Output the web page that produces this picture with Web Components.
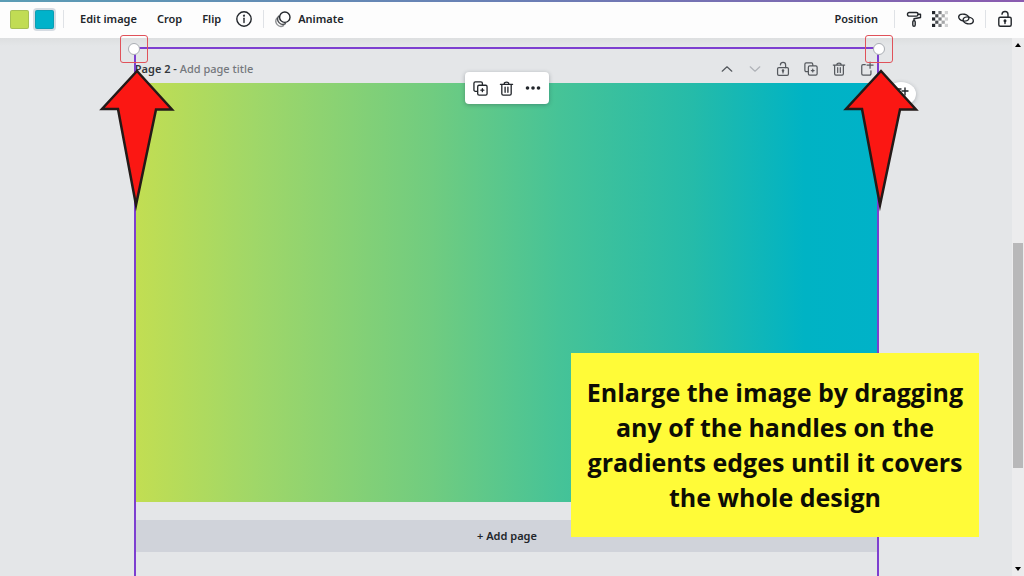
<!DOCTYPE html>
<html lang="en">

<head>
    <meta charset="UTF-8">
    <meta name="viewport" content="width=device-width, initial-scale=1.0">
    <title>Page editor</title>
    <style>
        html,
        body {
            height: 100%;
            margin: 0;
        }

        body {
            overflow: hidden;
            color: #22262b;
            background: #e4e6e8;
            font: 600 11px/16px "Noto Sans", sans-serif;
        }
    </style>

<template id="tool-button-template">
    <style>
        :host {
            display: flex;
        }
        button {
            display: flex;
            align-items: center;
            justify-content: center;
            gap: 7px;
            width: 100%;
            margin: 0;
            padding: 4px var(--pad, 10px);
            border: 0;
            border-radius: 4px;
            color: inherit;
            background: none;
            font: inherit;
            white-space: nowrap;
            cursor: pointer;
        }
        button:hover {
            background: rgba(64, 87, 109, .07);
        }
    </style>
    <button type="button"><slot></slot></button>
</template>

<template id="colour-swatch-template">
    <style>
        :host {
            display: block;
        }
        button {
            display: block;
            width: 19px;
            height: 19px;
            padding: 0;
            border: 1px solid rgba(60, 80, 90, .2);
            border-radius: 2px;
            background: var(--swatch);
        }
        :host([selected]) button {
            box-shadow: 0 0 0 2px #d5dbe2;
        }
    </style>
    <button type="button"></button>
</template>

<template id="editor-toolbar-template">
    <style>
        :host {
            display: block;
            background: #fdfdfd;
        }
        .strip {
            height: 2px;
            background: linear-gradient(90deg, #5b9db5, #6a7fb5 50%, #8a5bb0);
        }
        nav {
            display: flex;
            align-items: center;
            justify-content: space-between;
            height: 36px;
            padding: 0 6px 2px 10px;
            box-sizing: border-box;
        }
        .side,
        .swatches {
            display: flex;
            align-items: center;
        }
        .swatches {
            gap: 6px;
            padding-right: 3px;
        }
        .line {
            width: 1px;
            height: 18px;
            margin: 0 6px;
            background: #dfe2e6;
        }
        .icon {
            --pad: 0;
            width: 26px;
        }
    </style>
    <div class="strip"></div>
    <nav>
        <div class="side">
            <div class="swatches">
                <colour-swatch label="Green" style="--swatch: #c1dc54"></colour-swatch>
                <colour-swatch label="Teal" selected style="--swatch: #00b2ca"></colour-swatch>
            </div>
            <span class="line"></span>
            <tool-button>Edit image</tool-button>
            <tool-button>Crop</tool-button>
            <tool-button>Flip</tool-button>
            <tool-button class="icon" label="Info"><ui-icon name="info"></ui-icon></tool-button>
            <span class="line"></span>
            <tool-button style="--pad: 5px"><ui-icon name="animate"></ui-icon>Animate</tool-button>
        </div>
        <div class="side">
            <tool-button>Position</tool-button>
            <span class="line"></span>
            <tool-button class="icon" label="Copy style"><ui-icon name="roller"></ui-icon></tool-button>
            <tool-button class="icon" label="Transparency"><ui-icon name="checker"></ui-icon></tool-button>
            <tool-button class="icon" label="Link"><ui-icon name="link"></ui-icon></tool-button>
            <span class="line"></span>
            <tool-button class="icon" label="Lock"><ui-icon name="lock"></ui-icon></tool-button>
        </div>
    </nav>
</template>

<template id="page-header-template">
    <style>
        :host {
            display: flex;
            align-items: center;
            justify-content: space-between;
            height: 29px;
            color: #33373c;
        }
        h2 {
            margin: 0;
            font: inherit;
        }
        .actions {
            display: flex;
            gap: 4px;
            color: #55595e;
        }
        tool-button {
            --pad: 0;
            width: 24px;
        }
        .faded {
            color: #b0b3b8;
        }
    </style>
    <h2><slot></slot></h2>
    <div class="actions">
        <tool-button label="Move page up"><ui-icon name="up" size="14"></ui-icon></tool-button>
        <tool-button class="faded" label="Move page down"><ui-icon name="down" size="14"></ui-icon></tool-button>
        <tool-button label="Lock page"><ui-icon name="lock" size="14"></ui-icon></tool-button>
        <tool-button label="Duplicate page"><ui-icon name="copy" size="14"></ui-icon></tool-button>
        <tool-button label="Delete page"><ui-icon name="trash" size="14"></ui-icon></tool-button>
        <tool-button label="New page"><ui-icon name="newpage" size="14"></ui-icon></tool-button>
    </div>
</template>

<template id="float-menu-template">
    <style>
        :host {
            display: flex;
            padding: 4px 3px;
            border-radius: 4px;
            background: #fff;
            box-shadow: 0 1px 4px rgba(40, 50, 60, .35);
        }
        tool-button {
            --pad: 0;
            width: 26px;
        }
    </style>
    <tool-button label="Duplicate"><ui-icon name="copy" size="15"></ui-icon></tool-button>
    <tool-button label="Delete"><ui-icon name="trash" size="15"></ui-icon></tool-button>
    <tool-button label="More"><ui-icon name="more"></ui-icon></tool-button>
</template>

<template id="red-arrow-template">
    <style>
        :host {
            display: block;
            width: 76px;
        }
        svg {
            display: block;
            width: 100%;
        }
    </style>
    <svg viewBox="0 0 76 146" aria-hidden="true">
        <path d="M38 4 73 42.500H57L37 138 19 42H3Z" fill="#fb1713" stroke="#231a18" stroke-width="2.500" stroke-miterlimit="12"/>
    </svg>
</template>

<template id="selection-frame-template">
    <style>
        :host {
            display: block;
            border: 2px solid #7d3fd0;
            border-bottom: 0;
            pointer-events: none;
        }
        .corner {
            position: absolute;
            top: -14px;
            display: grid;
            place-items: center;
            width: 26px;
            height: 26px;
            border: 1px solid #e0525a;
            border-radius: 3px;
        }
        .left {
            left: -16px;
        }
        .right {
            right: -16px;
        }
        .handle {
            width: 10px;
            height: 10px;
            border: 1px solid #a9adb3;
            border-radius: 50%;
            background: #fff;
        }
        red-arrow {
            position: absolute;
            top: 18px;
        }
        .arrow-left {
            left: -37px;
        }
        .arrow-right {
            right: -42px;
        }
    </style>
    <red-arrow class="arrow-left"></red-arrow>
    <red-arrow class="arrow-right"></red-arrow>
    <div class="corner left"><span class="handle"></span></div>
    <div class="corner right"><span class="handle"></span></div>
</template>

<template id="design-page-template">
    <style>
        :host {
            display: block;
            position: relative;
            width: 73.7%;
            height: 100%;
            margin: 0 auto;
            padding-top: 16px;
            box-sizing: border-box;
        }
        .design {
            aspect-ratio: 16 / 9;
            background: linear-gradient(90deg, #c2de52, #a0d768 16%, #70cc80 40%, #46c397 57%, #25bba9 75%, #00b3c4 90%, #00b2c8);
        }
        .add {
            display: block;
            width: 100%;
            margin: 18px 0 0;
            padding: 8px;
            border: 0;
            color: inherit;
            background: #d0d3da;
            font: inherit;
        }
        float-menu {
            position: absolute;
            top: 34px;
            left: 50%;
            transform: translateX(-50%);
        }
        .comment {
            position: absolute;
            top: 44px;
            right: -37px;
            border-radius: 50%;
            background: #fff;
            box-shadow: 0 1px 4px rgba(40, 50, 60, .3);
            --pad: 7px;
        }
        selection-frame {
            position: absolute;
            top: 9px;
            right: 0;
            bottom: 0;
            left: -1px;
        }
    </style>
    <page-header><slot name="title"></slot></page-header>
    <div class="design"></div>
    <button class="add" type="button"><slot name="add"></slot></button>
    <tool-button class="comment" label="Add comment"><ui-icon name="comment"></ui-icon></tool-button>
    <float-menu></float-menu>
    <selection-frame></selection-frame>
</template>

<template id="scroll-rail-template">
    <style>
        :host {
            display: flex;
            flex-direction: column;
            width: 12px;
            background: #ececed;
        }
        button {
            display: grid;
            place-items: center;
            height: 14px;
            padding: 0;
            border: 0;
            color: #222;
            background: none;
        }
        .track {
            display: grid;
            flex: 1;
            grid-template-rows: 191fr 224fr 94fr;
        }
        .thumb {
            grid-row: 2;
            margin: 0 1px;
            background: #b8b8b9;
        }
    </style>
    <button type="button" aria-label="Scroll up"><svg width="6" height="4"><path d="M0 4 3 0l3 4z"/></svg></button>
    <div class="track"><div class="thumb"></div></div>
    <button type="button" aria-label="Scroll down"><svg width="6" height="4"><path d="M0 0h6L3 4z"/></svg></button>
</template>

<template id="tip-note-template">
    <style>
        :host {
            display: block;
            width: 408px;
            padding: 22px 8px;
            box-sizing: border-box;
            color: #0d0d05;
            background: #fffb38;
            font: 700 25px/35px "Open Sans", sans-serif;
            text-align: center;
        }
        p {
            margin: 0;
        }
    </style>
    <p><slot></slot></p>
</template>

<template id="design-editor-template">
    <style>
        :host {
            display: flex;
            flex-direction: column;
            position: relative;
            height: 100%;
        }
        .workspace {
            display: flex;
            flex: 1;
            min-height: 0;
        }
        main {
            flex: 1;
            position: relative;
            min-width: 0;
            padding-left: 2px;
            background: linear-gradient(#dddfe0, #e4e6e8 8px);
        }
        ::slotted(tip-note) {
            position: absolute;
            right: 45px;
            bottom: 39px;
        }
    </style>
    <editor-toolbar></editor-toolbar>
    <div class="workspace">
        <main><slot></slot></main>
        <scroll-rail></scroll-rail>
    </div>
    <slot name="note"></slot>
</template>
</head>

<body>
    <design-editor>
        <design-page>
            <page-title slot="title">Page 2 - <span>Add page title</span></page-title>
            <span slot="add">+ Add page</span>
        </design-page>
        <tip-note slot="note">Enlarge the image by dragging any of the handles on the gradients edges until it covers the whole design</tip-note>
    </design-editor>

<script>
    // 16x16 line icons
    const icons = {
        info: '<circle cx="8" cy="8" r="7.200"/><path d="M8 7.300v4.200"/><circle cx="8" cy="4.700" r=".4" fill="currentColor"/>',
        animate: '<circle cx="9.800" cy="6.200" r="5.200"/><path d="M3.600 5.200a5.200 5.200 0 0 0 6.800 7.500" opacity=".8"/><path d="M1.800 7.200a5.200 5.200 0 0 0 6.800 7.500" opacity=".5"/>',
        roller: '<rect x="1.500" y="1.500" width="10.500" height="3.600" rx="1.600"/><path d="M12 3.200h2.500v3.300L8 7.800v2"/><rect x="6.800" y="9.600" width="2.400" height="5.600" rx="1.200"/>',
        link: '<ellipse cx="5.800" cy="6.600" rx="5.200" ry="3.400" transform="rotate(12 5.800 6.600)"/><ellipse cx="10.200" cy="9.400" rx="5.200" ry="3.400" transform="rotate(12 10.200 9.400)"/>',
        lock: '<rect x="1.800" y="6.300" width="12.400" height="9" rx="1.500"/><path d="M5 3.200C5.500-.5 11-.300 11 3.500v2.800M8 9.500v3"/><circle cx="8" cy="9.800" r=".8" fill="currentColor"/>',
        up: '<path d="m2.500 10.500 5.500-5 5.500 5"/>',
        down: '<path d="m2.500 5.500 5.500 5 5.500-5"/>',
        copy: '<path d="M4.500 11H2.500A1.500 1.500 0 0 1 1 9.500v-7A1.500 1.500 0 0 1 2.500 1h6A1.500 1.500 0 0 1 10 2.500V4"/><rect x="5" y="4.500" width="10" height="10.500" rx="1.500"/><path d="M10 8.200v3.200M8.400 9.800h3.200"/>',
        trash: '<path d="M1.500 3.500h13M5.500 3.300C5.500.500 10.500.500 10.500 3.300M3 3.700v9.800A1.500 1.500 0 0 0 4.500 15h7a1.500 1.500 0 0 0 1.500-1.500V3.700M6.500 6.500v5.500M9.500 6.500v5.500"/>',
        more: '<g fill="currentColor" stroke="none"><circle cx="2.500" cy="8" r="1.800"/><circle cx="8" cy="8" r="1.800"/><circle cx="13.500" cy="8" r="1.800"/></g>',
        newpage: '<path d="M6 3H3.500A1.500 1.500 0 0 0 2 4.500v9A1.500 1.500 0 0 0 3.500 15H11a1.500 1.500 0 0 0 1.500-1.500V10M11.500 0v7M8 3.500h7"/>',
        comment: '<path d="M12 2v7M9 5h6M8 3H3.500A1.500 1.500 0 0 0 2 4.500v6A1.500 1.500 0 0 0 3.500 12H10"/>'
    }

    // transparency checkerboard, fading out to the right
    let cells = ""
    for (let y = 0; y < 5; y++) {
        for (let x = 0; x < 5; x++) {
            if ((x + y) % 2 == 0) {
                cells += `<rect x="${x * 3.2}" y="${y * 3.2}" width="3.2" height="3.2" opacity="${1 - x * 0.2}"/>`
            }
        }
    }
    icons.checker = `<g fill="currentColor" stroke="none">${cells}</g>`

    class UiIcon extends HTMLElement {
        connectedCallback() {
            if (this.shadowRoot) return
            let size = this.getAttribute("size") || 16
            this.attachShadow({ mode: "open" }).innerHTML = `
                <style>
                    :host { display: block; }
                    svg { display: block; overflow: visible; }
                </style>
                <svg width="${size}" height="${size}" viewBox="0 0 16 16" fill="none" stroke="currentColor"
                    stroke-width="1.4" stroke-linecap="round" stroke-linejoin="round" aria-hidden="true">
                    ${icons[this.getAttribute("name")]}
                </svg>`
        }
    }
    customElements.define("ui-icon", UiIcon)

    class TemplateElement extends HTMLElement {
        connectedCallback() {
            if (this.shadowRoot) return
            let template = document.getElementById(this.localName + "-template")
            let shadowRoot = this.attachShadow({ mode: "open" })
            shadowRoot.appendChild(template.content.cloneNode(true))
            if (this.hasAttribute("label")) {
                shadowRoot.querySelector("button").setAttribute("aria-label", this.getAttribute("label"))
            }
        }
    }

    class PageTitle extends HTMLElement {
        constructor() {
            super()
            this.attachShadow({ mode: "open" }).innerHTML = `
                <style>
                    :host { display: block; }
                    ::slotted(span) { color: #74787d; font-weight: 500; }
                </style>
                <slot></slot>`
        }
    }
    customElements.define("page-title", PageTitle)

    customElements.define("tool-button", class extends TemplateElement {})
    customElements.define("colour-swatch", class extends TemplateElement {})
    customElements.define("editor-toolbar", class extends TemplateElement {})
    customElements.define("page-header", class extends TemplateElement {})
    customElements.define("float-menu", class extends TemplateElement {})
    customElements.define("red-arrow", class extends TemplateElement {})
    customElements.define("selection-frame", class extends TemplateElement {})
    customElements.define("design-page", class extends TemplateElement {})
    customElements.define("scroll-rail", class extends TemplateElement {})
    customElements.define("tip-note", class extends TemplateElement {})
    customElements.define("design-editor", class extends TemplateElement {})
</script>
</body>

</html>
